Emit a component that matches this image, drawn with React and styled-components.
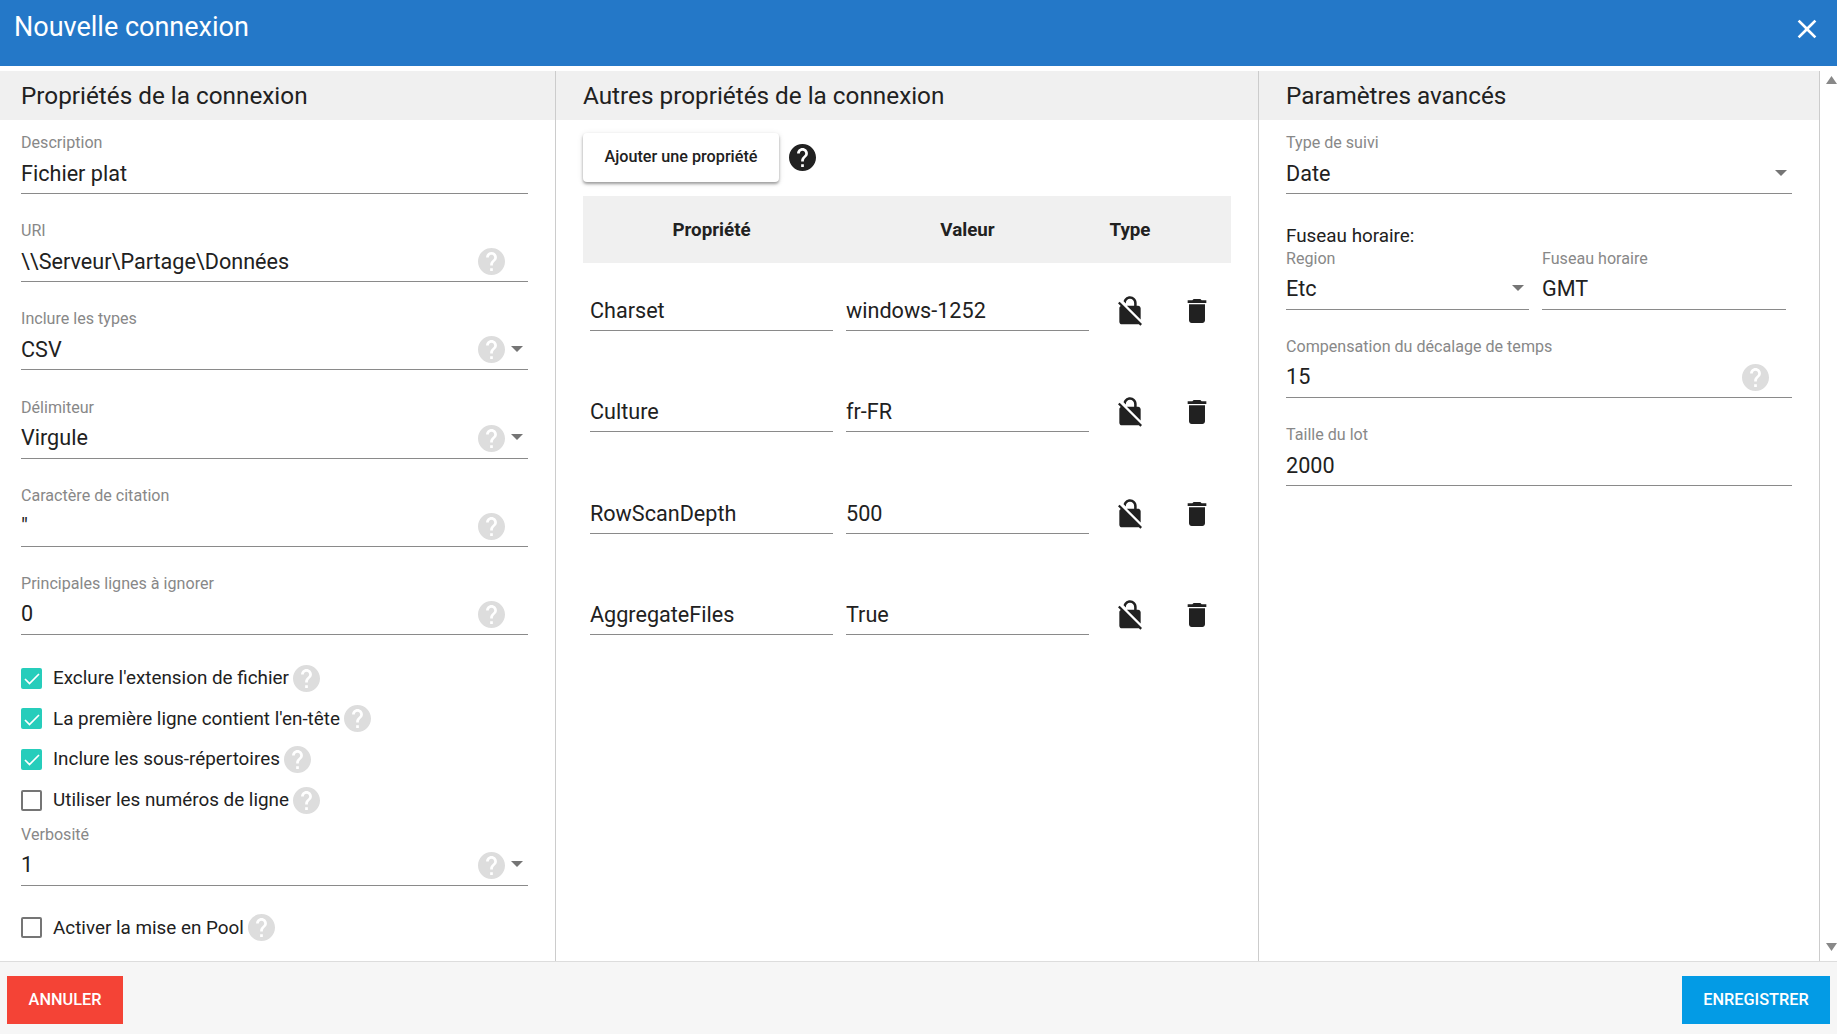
import React from "react";
import styled, { createGlobalStyle } from "styled-components";

const HELP_PATH =
    "M12 2C6.48 2 2 6.48 2 12s4.48 10 10 10 10-4.48 10-10S17.52 2 12 2zm1 17h-2v-2h2v2zm2.07-7.75l-.9.92C13.45 12.9 13 13.5 13 15h-2v-.5c0-1.1.45-2.1 1.17-2.83l1.24-1.26c.37-.36.59-.86.59-1.41 0-1.1-.9-2-2-2s-2 .9-2 2H8c0-2.21 1.79-4 4-4s4 1.79 4 4c0 .88-.36 1.68-.93 2.25z";

const GlobalStyle = createGlobalStyle`
    html, body {
        margin: 0;
        padding: 0;
        height: 100%;
        background: #fff;
        font-family: Roboto, "Liberation Sans", sans-serif;
        color: #212121;
    }
    #root {
        height: 100%;
    }
`;

const Page = styled.div`
    height: 1034px;
    display: flex;
    flex-direction: column;
    overflow: hidden;
`;

const TopBar = styled.header`
    height: 66px;
    flex: none;
    background: #2478c8;
    color: #fff;
    display: flex;
    justify-content: space-between;
    align-items: flex-start;
    padding: 12px 14px 0 14px;
    box-sizing: border-box;
`;

const Title = styled.h1`
    margin: 0;
    font-size: 27px;
    line-height: 30px;
    font-weight: 400;
`;

const CloseIcon = styled.svg`
    width: 32px;
    height: 32px;
    margin: 1px 0 0;
    fill: #fff;
`;

const Body = styled.main`
    flex: 1;
    min-height: 0;
    margin-top: 5px;
    display: flex;
`;

const Column = styled.section`
    width: ${(p) => p.$width}px;
    flex: none;
    box-sizing: border-box;
    border-right: 1px solid #ccc;
`;

const ColumnTitle = styled.h2`
    margin: 0;
    height: 49px;
    background: #f0f0f0;
    font-size: 24.3px;
    line-height: 50px;
    font-weight: 400;
    padding-left: ${(p) => p.$inset}px;
`;

const ColumnBody = styled.div`
    padding: 12px 27px 0 ${(p) => p.$inset}px;
`;

const Field = styled.div`
    margin-bottom: 26.2px;
    margin-top: ${(p) => p.$top || 0}px;
    flex: ${(p) => (p.$width ? `0 0 ${p.$width}px` : "none")};
`;

const Label = styled.div`
    height: 20px;
    font-size: 16.1px;
    line-height: 22px;
    color: #888;
`;

const ValueRow = styled.div`
    height: 41px;
    display: flex;
    align-items: center;
    border-bottom: 1.2px solid #8a8a8a;
`;

const Value = styled.span`
    flex: 1;
    font-size: 21.6px;
    padding-top: 1px;
`;

const HelpIcon = styled.svg`
    width: 27px;
    height: 27px;
    flex: none;
    fill: ${(p) => (p.$dark ? "#212121" : "#ddd")};
    margin-right: ${(p) => p.$after || 0}px;
`;

const RowHelp = styled(HelpIcon)`
    margin-top: 2px;
`;

const Arrow = styled.svg`
    width: 12px;
    height: 6px;
    flex: none;
    fill: #757575;
    margin: 0 5px 0 6.5px;
`;

const CheckGroup = styled.div`
    margin-top: ${(p) => p.$top}px;
`;

const CheckRow = styled.div`
    height: 40.6px;
    display: flex;
    align-items: center;
    font-size: 18.85px;
`;

const Box = styled.span`
    width: 21px;
    height: 21px;
    flex: none;
    box-sizing: border-box;
    margin-right: 11px;
    border-radius: 2px;
    display: flex;
    align-items: center;
    justify-content: center;
    background: ${(p) => (p.$on ? "#26cdbb" : "#fff")};
    border: ${(p) => (p.$on ? "none" : "2px solid #757575")};

    svg {
        width: 18px;
        height: 18px;
        fill: none;
        stroke: #fff;
        stroke-width: 1.7;
    }
`;

const InlineHelp = styled(HelpIcon)`
    margin-left: 4px;
`;

const Toolbar = styled.div`
    display: flex;
    align-items: center;
    gap: 9.5px;
    margin-top: 1px;
`;

const AddButton = styled.button`
    width: 196px;
    height: 49px;
    border: none;
    border-radius: 4px;
    background: #fff;
    color: #212121;
    padding: 0 0 2px;
    font: 500 16.2px Roboto, sans-serif;
    box-shadow: 0 2px 3px rgba(0, 0, 0, 0.35), 0 1px 6px rgba(0, 0, 0, 0.1);
`;

const PropertyGrid = styled.div`
    margin-top: 14px;
    display: grid;
    grid-template-columns: 243px 243px 56px 53px;
    column-gap: 13px;
    padding: 0 7px;
`;

const HeadBand = styled.div`
    grid-column: 1 / -1;
    display: grid;
    grid-template-columns: subgrid;
    height: 67px;
    margin: 0 -7px;
    padding: 0 7px;
    background: #f0f0f0;
    align-items: center;
    text-align: center;
    font-size: 18.75px;
    font-weight: 700;
`;

const GridRow = styled.div`
    grid-column: 1 / -1;
    display: grid;
    grid-template-columns: subgrid;
    height: 101.3px;
    padding-top: 28px;
    box-sizing: border-box;
    align-items: start;
`;

const CellInput = styled.div`
    height: 40px;
    box-sizing: border-box;
    display: flex;
    align-items: center;
    font-size: 21.6px;
    border-bottom: 1.2px solid #8a8a8a;
`;

const CellIcon = styled.div`
    height: 40px;
    display: flex;
    align-items: center;
    justify-content: center;
    margin-right: ${(p) => p.$shift || 0}px;

    svg {
        width: 32px;
        height: 32px;
        fill: #212121;
    }
`;

const TimezoneTitle = styled.div`
    margin-top: -2px;
    padding-top: 7px;
    height: 21px;
    font-size: 18.85px;
    line-height: 22px;
`;

const TimezoneRow = styled.div`
    display: flex;
    gap: 13px;
    margin-top: 1.5px;
`;

const Scrollbar = styled.div`
    flex: 1;
    display: flex;
    flex-direction: column;
    justify-content: space-between;
    padding: 5px 0 10px 6px;

    svg {
        width: 11px;
        height: 8px;
        fill: #888;
    }
`;

const Footer = styled.footer`
    height: 73px;
    flex: none;
    box-sizing: border-box;
    border-top: 1.5px solid #ddd;
    background: #f6f6f6;
    display: flex;
    justify-content: space-between;
    padding: 13.5px 7px 0;
`;

const ActionButton = styled.button`
    width: ${(p) => p.$width}px;
    height: 48px;
    border: none;
    color: #fff;
    background: ${(p) => p.$color};
    padding: 0 0 1px;
    font: 500 16.3px Roboto, sans-serif;
`;

const Help = (props) => (
    <RowHelp viewBox="2 2 20 20" {...props}>
        <path d={HELP_PATH} />
    </RowHelp>
);

const ToolbarHelp = () => (
    <HelpIcon viewBox="2 2 20 20" $dark>
        <path d={HELP_PATH} />
    </HelpIcon>
);

const CheckHelp = () => (
    <InlineHelp viewBox="2 2 20 20">
        <path d={HELP_PATH} />
    </InlineHelp>
);

const DropArrow = () => (
    <Arrow viewBox="0 0 10 5">
        <path d="M0 0l5 5 5-5z" />
    </Arrow>
);

const TextField = ({ label, value, help, select, top, width }) => (
    <Field $top={top} $width={width}>
        <Label>{label}</Label>
        <ValueRow>
            <Value>{value}</Value>
            {help && <Help $after={select ? 0 : 23} />}
            {select && <DropArrow />}
        </ValueRow>
    </Field>
);

const Check = ({ on, label }) => (
    <CheckRow>
        <Box $on={on}>
            {on && (
                <svg viewBox="0 0 18 18">
                    <path d="M2 10l4.5 4.5L16 5" />
                </svg>
            )}
        </Box>
        {label}
        <CheckHelp />
    </CheckRow>
);

const properties = [
    ["Charset", "windows-1252"],
    ["Culture", "fr-FR"],
    ["RowScanDepth", "500"],
    ["AggregateFiles", "True"],
];

const App = () => {
    return (
        <Page>
            <GlobalStyle />
            <TopBar>
                <Title>Nouvelle connexion</Title>
                <CloseIcon viewBox="0 0 24 24">
                    <path d="M19 6.41L17.59 5 12 10.59 6.41 5 5 6.41 10.59 12 5 17.59 6.41 19 12 13.41 17.59 19 19 17.59 13.41 12z" />
                </CloseIcon>
            </TopBar>

            <Body>
                <Column $width={556}>
                    <ColumnTitle $inset={21}>Propriétés de la connexion</ColumnTitle>
                    <ColumnBody $inset={21}>
                        <TextField label="Description" value="Fichier plat" />
                        <TextField label="URI" value="\\Serveur\Partage\Données" help />
                        <TextField label="Inclure les types" value="CSV" help select />
                        <TextField label="Délimiteur" value="Virgule" help select />
                        <TextField label="Caractère de citation" value={'"'} help />
                        <TextField label="Principales lignes à ignorer" value="0" help />
                        <CheckGroup $top={-3.2}>
                            <Check on label="Exclure l'extension de fichier" />
                            <Check on label="La première ligne contient l'en-tête" />
                            <Check on label="Inclure les sous-répertoires" />
                            <Check label="Utiliser les numéros de ligne" />
                        </CheckGroup>
                        <TextField label="Verbosité" value="1" help select top={3.5} />
                        <CheckGroup $top={-4.5}>
                            <Check label="Activer la mise en Pool" />
                        </CheckGroup>
                    </ColumnBody>
                </Column>

                <Column $width={703}>
                    <ColumnTitle $inset={27}>Autres propriétés de la connexion</ColumnTitle>
                    <ColumnBody $inset={27}>
                        <Toolbar>
                            <AddButton>Ajouter une propriété</AddButton>
                            <ToolbarHelp />
                        </Toolbar>
                        <PropertyGrid>
                            <HeadBand>
                                <span>Propriété</span>
                                <span>Valeur</span>
                                <span>Type</span>
                            </HeadBand>
                            {properties.map(([name, value]) => (
                                <GridRow key={name}>
                                    <CellInput>{name}</CellInput>
                                    <CellInput>{value}</CellInput>
                                    <CellIcon>
                                        <svg viewBox="0 0 24 24">
                                            <path d="M21 21.78L4.22 5 3 6.22l2.04 2.04C4.42 8.6 4 9.25 4 10v10c0 1.1.9 2 2 2h12c.23 0 .45-.05.66-.12L19.78 23 21 21.78zM8.9 6c0-1.71 1.39-3.1 3.1-3.1s3.1 1.39 3.1 3.1v2H9.66L20 18.34V10c0-1.1-.9-2-2-2h-1V6c0-2.76-2.24-5-5-5-2.32 0-4.26 1.59-4.82 3.74L8.9 6.46V6z" />
                                        </svg>
                                    </CellIcon>
                                    <CellIcon $shift={2}>
                                        <svg viewBox="0 0 24 24">
                                            <path d="M6 19c0 1.1.9 2 2 2h8c1.1 0 2-.9 2-2V7H6v12zM19 4h-3.5l-1-1h-5l-1 1H5v2h14V4z" />
                                        </svg>
                                    </CellIcon>
                                </GridRow>
                            ))}
                        </PropertyGrid>
                    </ColumnBody>
                </Column>

                <Column $width={561}>
                    <ColumnTitle $inset={27}>Paramètres avancés</ColumnTitle>
                    <ColumnBody $inset={27}>
                        <TextField label="Type de suivi" value="Date" select />
                        <TimezoneTitle>Fuseau horaire:</TimezoneTitle>
                        <TimezoneRow>
                            <TextField label="Region" value="Etc" select width={243} />
                            <TextField label="Fuseau horaire" value="GMT" width={244} />
                        </TimezoneRow>
                        <TextField label="Compensation du décalage de temps" value="15" help />
                        <TextField label="Taille du lot" value="2000" />
                    </ColumnBody>
                </Column>

                <Scrollbar>
                    <svg viewBox="0 0 11 8">
                        <path d="M5.5 0L11 8H0z" />
                    </svg>
                    <svg viewBox="0 0 11 8">
                        <path d="M0 0h11L5.5 8z" />
                    </svg>
                </Scrollbar>
            </Body>

            <Footer>
                <ActionButton $width={116} $color="#f44336">ANNULER</ActionButton>
                <ActionButton $width={148} $color="#039be5">ENREGISTRER</ActionButton>
            </Footer>
        </Page>
    );
};

export default App;
